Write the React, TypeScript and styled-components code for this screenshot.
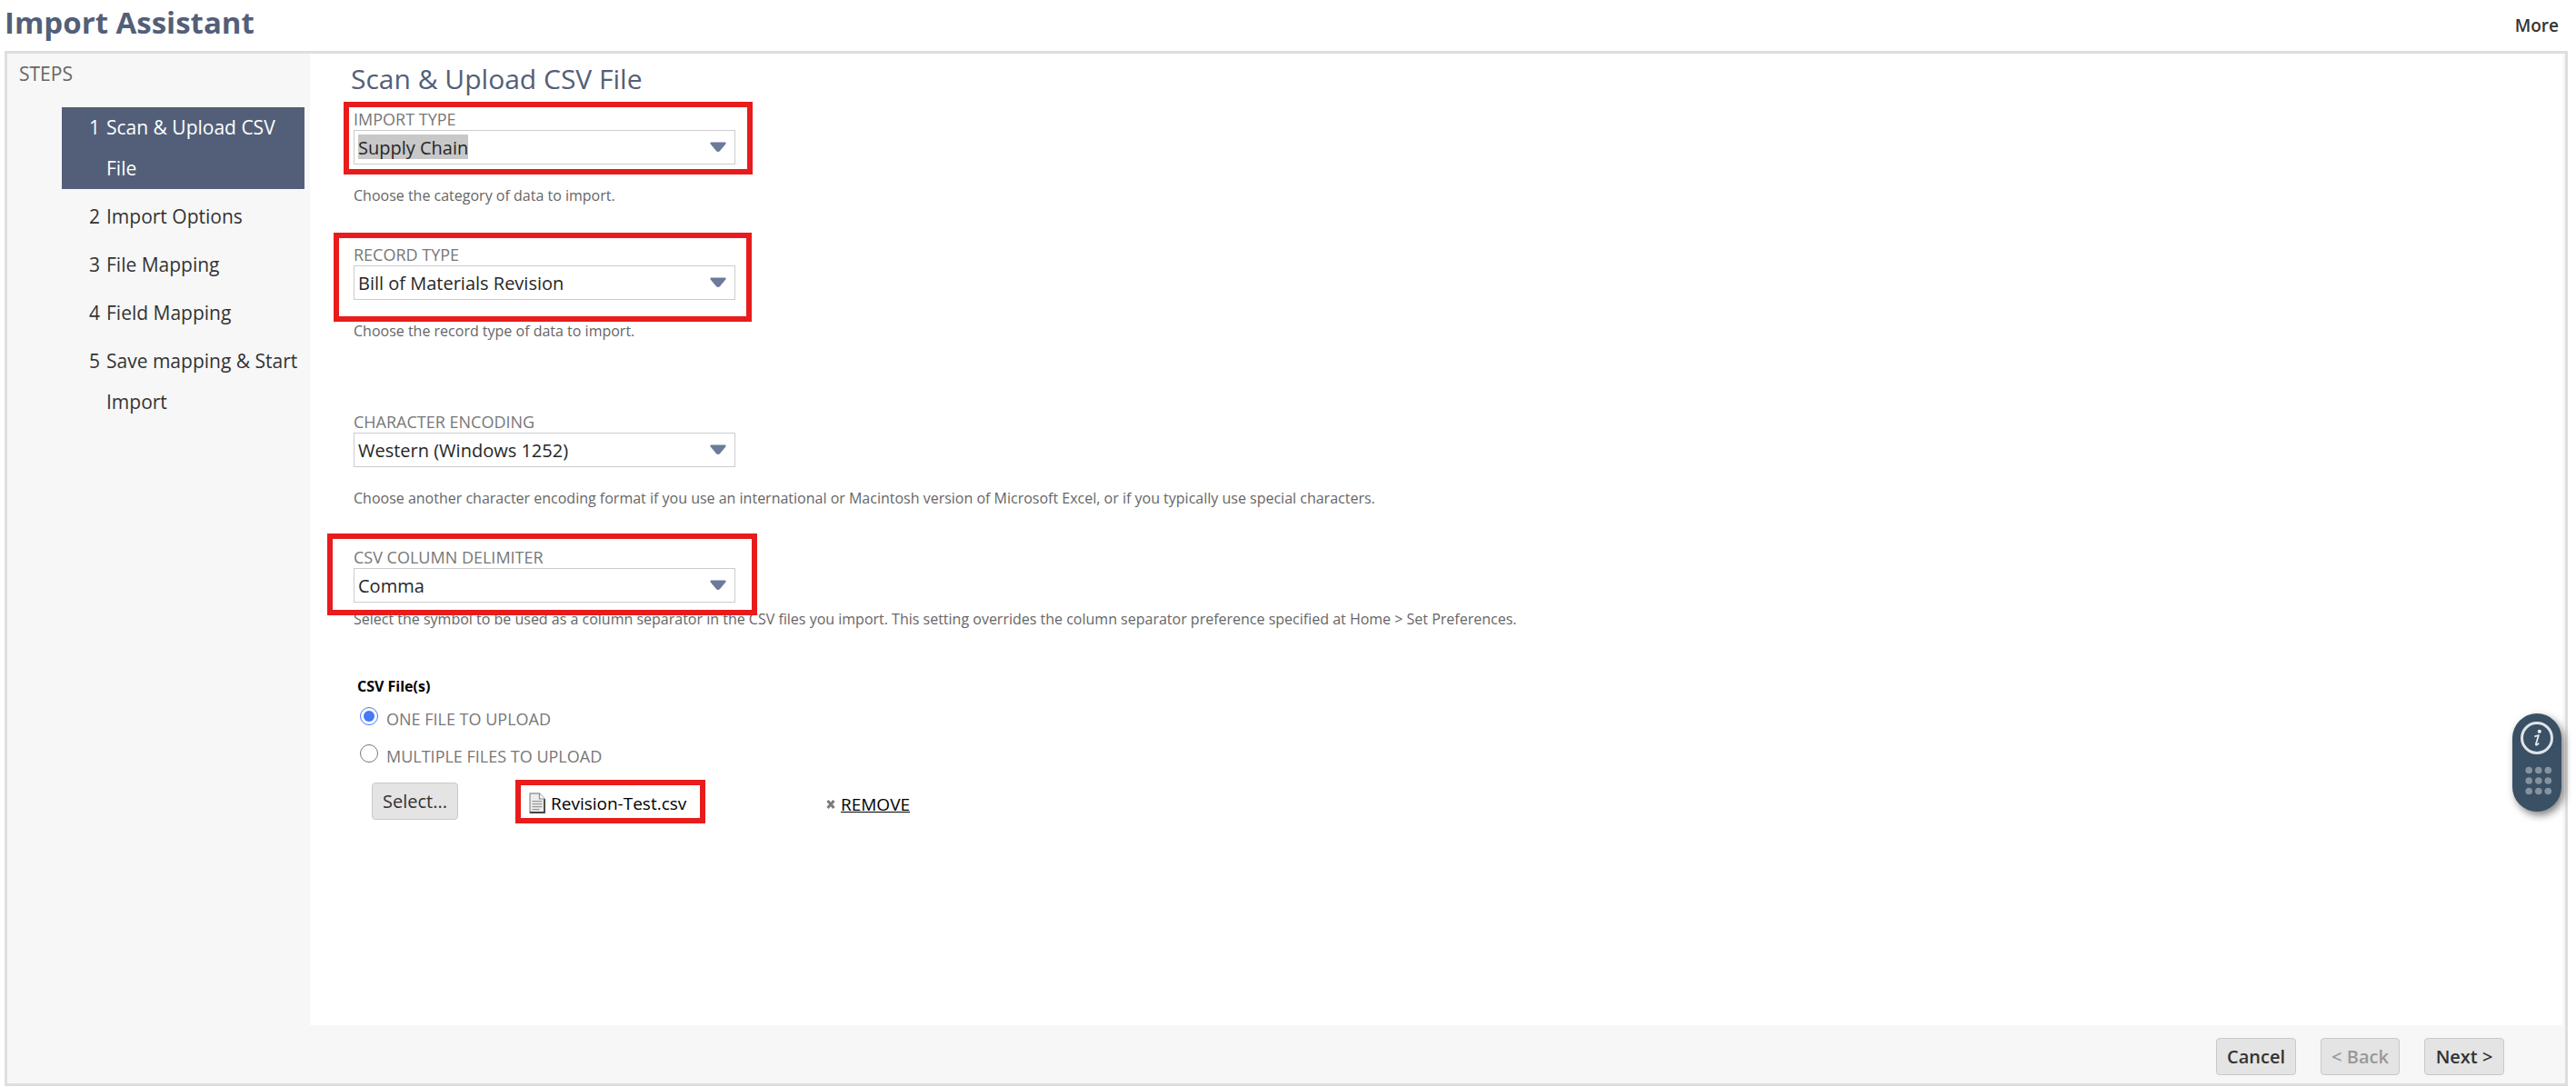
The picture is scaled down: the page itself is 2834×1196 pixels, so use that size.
import React, { useState } from 'react';
import styled, { createGlobalStyle, css } from 'styled-components';

const GlobalStyle = createGlobalStyle`
  *, *::before, *::after { box-sizing: border-box; }
  body {
    margin: 0;
    background: #fff;
    color: #262626;
    font-family: 'Open Sans', 'Noto Sans', sans-serif;
    font-size: 20px;
  }
`;

const Page = styled.div`
  display: flex;
  flex-direction: column;
  min-height: 100vh;
  padding: 0 9px 1px 5px;
`;

const Header = styled.header`
  display: flex;
  justify-content: space-between;
  height: 56px;
  padding: 3px 10px 0 0;
`;

const PageTitle = styled.h1`
  margin: 0;
  color: #535f79;
  font-size: 33px;
  line-height: 44px;
  font-weight: 700;
`;

const MoreButton = styled.button`
  align-self: flex-start;
  padding: 0;
  border: 0;
  background: none;
  color: #333;
  font: 600 19px/50px 'Open Sans', 'Noto Sans', sans-serif;
  cursor: pointer;
`;

const Frame = styled.div`
  flex: 1;
  display: flex;
  flex-direction: column;
  border: 3px solid #dedede;
  background: #f7f7f7;
`;

const Columns = styled.div`
  flex: 1;
  display: grid;
  grid-template-columns: 333px minmax(0, 1fr);
  padding-right: 3px;
`;

const Sidebar = styled.nav`
  padding: 6px 6px 0 13px;
`;

const SidebarTitle = styled.div`
  color: #666;
  font-size: 21px;
  line-height: 32px;
`;

const StepList = styled.ol`
  display: flex;
  flex-direction: column;
  gap: 8px;
  margin: 21px 0 0 47px;
  padding: 0;
  list-style: none;
`;

const Step = styled.li<{ $active?: boolean }>`
  display: grid;
  grid-template-columns: 19px 1fr;
  padding-left: 30px;
  background: ${(p) => (p.$active ? '#535f79' : 'transparent')};
  color: ${(p) => (p.$active ? '#fff' : '#333')};
  font-size: 21px;
  line-height: 45px;
`;

const Main = styled.main`
  padding: 8px 45px 40px;
  background: #fff;
`;

const Heading = styled.h2`
  margin: 0 0 12px;
  color: #535f79;
  font-size: 30px;
  line-height: 40px;
  font-weight: 400;
`;

const Field = styled.div<{ $after: number }>`
  margin: 0 0 ${(p) => p.$after}px 3px;
`;

const FieldBox = styled.div`
  position: relative;
  width: 420px;
`;

const FieldLabel = styled.label`
  display: block;
  color: #777;
  font-size: 18px;
  line-height: 24px;
`;

const Hint = styled.p<{ $tight?: boolean }>`
  margin: ${(p) => (p.$tight ? 6 : 22)}px 0 0;
  color: #666;
  font-size: 16px;
  line-height: 24px;
`;

const SelectWrap = styled.div`
  position: relative;
`;

const Select = styled.select<{ $selected?: boolean }>`
  display: block;
  width: 100%;
  height: 38px;
  padding: 1px 40px 0 4px;
  border: 1px solid #ccc;
  border-radius: 0;
  appearance: none;
  background-color: #fff;
  ${(p) =>
    p.$selected &&
    css`
      background-image: linear-gradient(#c8c8c8, #c8c8c8);
      background-repeat: no-repeat;
      background-position: 4px 4px;
      background-size: 121px 27px;
    `}
  color: #262626;
  font: 400 20px/36px 'Open Sans', 'Noto Sans', sans-serif;
`;

const Arrow = styled.svg`
  position: absolute;
  top: 13px;
  right: 10px;
  pointer-events: none;
`;

const Callout = styled.span<{ $inset: string }>`
  position: absolute;
  inset: ${(p) => p.$inset};
  z-index: 1;
  border: 6px solid #e81c1c;
  pointer-events: none;
`;

const FileSet = styled.fieldset`
  margin: 0 0 0 7px;
  padding: 0;
  border: 0;
`;

const FileLegend = styled.legend`
  padding: 0;
  color: #000;
  font-size: 16px;
  line-height: 24px;
  font-weight: 700;
`;

const RadioRow = styled.label`
  display: flex;
  align-items: center;
  gap: 9px;
  height: 41px;
  padding-left: 3px;
  color: #777;
  font-size: 18px;
`;

const RadioText = styled.span`
  padding-top: 6px;
  line-height: 24px;
`;

const Radio = styled.input`
  width: 20px;
  height: 20px;
  margin: 0;
  accent-color: #4479f7;
`;

const UploadRow = styled.div`
  display: grid;
  grid-template-columns: 173px 327px auto;
  justify-content: start;
  align-items: center;
  margin: 12px 0 0 16px;
`;

const Button = styled.button<{ $strong?: boolean; $width: number }>`
  justify-self: start;
  min-width: ${(p) => p.$width}px;
  height: 41px;
  padding: 0;
  border: 1px solid #c9c9c9;
  border-radius: 4px;
  background: #e4e4e4;
  color: #333;
  font: ${(p) => (p.$strong ? 600 : 400)} 20px/36px 'Open Sans', 'Noto Sans', sans-serif;
  cursor: pointer;
  &:disabled {
    color: #999;
    cursor: default;
  }
`;

const FileName = styled.span`
  position: relative;
  justify-self: start;
  display: flex;
  align-items: center;
  gap: 6px;
  padding-top: 4px;
  color: #000;
  font-size: 19px;
  line-height: 28px;
`;

const RemoveLink = styled.a`
  display: flex;
  align-items: center;
  gap: 6px;
  padding-top: 6px;
  color: #000;
  font-size: 19px;
  line-height: 28px;
  text-decoration: none;
`;

const RemoveText = styled.span`
  text-decoration: underline;
`;

const Footer = styled.footer`
  display: flex;
  justify-content: flex-end;
  gap: 27px;
  height: 64px;
  padding: 14px 67px 0 0;
`;

const Widget = styled.aside`
  position: fixed;
  top: 785px;
  right: 16px;
  z-index: 2;
  display: flex;
  width: 54px;
  height: 108px;
  border-radius: 27px;
  background: #3a5064;
  box-shadow: 3px 4px 9px rgba(0, 0, 0, 0.5);
`;

const WidgetButton = styled.button`
  padding: 0;
  border: 0;
  background: none;
  cursor: pointer;
`;

type SelectFieldProps = {
  id: string;
  label: string;
  value: string;
  hint: string;
  after: number;
  callout?: string;
  tight?: boolean;
  selected?: boolean;
};

function SelectField({ id, label, value, hint, after, callout, tight, selected }: SelectFieldProps) {
  return (
    <Field $after={after}>
      <FieldBox>
        <FieldLabel htmlFor={id}>{label}</FieldLabel>
        <SelectWrap>
          <Select id={id} defaultValue={value} $selected={selected}>
            <option>{value}</option>
          </Select>
          <Arrow width="18" height="12" viewBox="0 0 18 12" aria-hidden="true">
            <path d="M1.5 0.5h15q1.5 0 1 1.8l-6.2 7.5q-2.3 2.4-4.6 0l-6.2-7.5q-.5-1.8 1-1.8z" fill="#6b7b99" />
          </Arrow>
        </SelectWrap>
        {callout && <Callout $inset={callout} />}
      </FieldBox>
      <Hint $tight={tight}>{hint}</Hint>
    </Field>
  );
}

function FileIcon() {
  return (
    <svg width="18" height="23" viewBox="0 0 18 23" aria-hidden="true">
      <path d="M1 1h10.5l5.5 6v15H1z" fill="#ececec" stroke="#999" strokeWidth="1.4" />
      <path d="M1 22h16V7" fill="none" stroke="#444" strokeWidth="1.8" />
      <path d="M11.5 1v6H17" fill="#fff" stroke="#888" strokeWidth="1.2" />
      <path d="M3.5 9.7h11M3.5 12.7h11M3.5 15.7h11M3.5 18.7h8" stroke="#999" strokeWidth="1.3" />
    </svg>
  );
}

function CrossIcon() {
  return (
    <svg width="10" height="10" viewBox="0 0 10 10" aria-hidden="true">
      <path d="M1.5 1l7 8M8.5 1l-7 8" stroke="#7c7c7c" strokeWidth="3" />
    </svg>
  );
}

const steps = ['Scan & Upload CSV File', 'Import Options', 'File Mapping', 'Field Mapping', 'Save mapping & Start Import'];

export default function App() {
  const [mode, setMode] = useState('one');
  return (
    <>
      <GlobalStyle />
      <Page>
        <Header>
          <PageTitle>Import Assistant</PageTitle>
          <MoreButton type="button">More</MoreButton>
        </Header>
        <Frame>
          <Columns>
            <Sidebar>
              <SidebarTitle>STEPS</SidebarTitle>
              <StepList>
                {steps.map((name, i) => (
                  <Step key={name} $active={i === 0}>
                    <span>{i + 1}</span>
                    <span>{name}</span>
                  </Step>
                ))}
              </StepList>
            </Sidebar>
            <Main>
              <Heading>Scan &amp; Upload CSV File</Heading>
              <SelectField
                id="import-type"
                label="IMPORT TYPE"
                value="Supply Chain"
                hint="Choose the category of data to import."
                after={41}
                callout="-7px -19px -11px -11px"
                selected
              />
              <SelectField
                id="record-type"
                label="RECORD TYPE"
                value="Bill of Materials Revision"
                hint="Choose the record type of data to import."
                after={76}
                callout="-12px -18px -24px -22px"
              />
              <SelectField
                id="encoding"
                label="CHARACTER ENCODING"
                value="Western (Windows 1252)"
                hint="Choose another character encoding format if you use an international or Macintosh version of Microsoft Excel, or if you typically use special characters."
                after={41}
              />
              <SelectField
                id="delimiter"
                label="CSV COLUMN DELIMITER"
                value="Comma"
                hint="Select the symbol to be used as a column separator in the CSV files you import. This setting overrides the column separator preference specified at Home > Set Preferences."
                after={50}
                callout="-14px -24px -14px -29px"
                tight
              />
              <FileSet>
                <FileLegend>CSV File(s)</FileLegend>
                <RadioRow>
                  <Radio type="radio" name="mode" checked={mode === 'one'} onChange={() => setMode('one')} />
                  <RadioText>ONE FILE TO UPLOAD</RadioText>
                </RadioRow>
                <RadioRow>
                  <Radio type="radio" name="mode" checked={mode === 'many'} onChange={() => setMode('many')} />
                  <RadioText>MULTIPLE FILES TO UPLOAD</RadioText>
                </RadioRow>
                <UploadRow>
                  <Button type="button" $width={95}>Select...</Button>
                  <FileName>
                    <FileIcon />
                    Revision-Test.csv
                    <Callout $inset="-8px -21px -8px -15px" />
                  </FileName>
                  <RemoveLink href="#remove">
                    <CrossIcon />
                    <RemoveText>REMOVE</RemoveText>
                  </RemoveLink>
                </UploadRow>
              </FileSet>
            </Main>
          </Columns>
          <Footer>
            <Button type="button" $strong $width={88}>Cancel</Button>
            <Button type="button" $strong $width={87} disabled>&lt; Back</Button>
            <Button type="button" $strong $width={88}>Next &gt;</Button>
          </Footer>
        </Frame>
      </Page>
      <Widget>
        <WidgetButton type="button" aria-label="Help">
          <svg width="54" height="108" viewBox="0 0 54 108" aria-hidden="true">
            <circle cx="27" cy="27" r="16.5" fill="none" stroke="#dfe3ea" strokeWidth="3" />
            <circle cx="29.8" cy="19.8" r="2.1" fill="#e8ebf0" />
            <path d="M24.3 25.3l4.6-1.3-2.9 9.3q-.5 2 1.2 1.1l2-1.6" fill="none" stroke="#e8ebf0" strokeWidth="1.8" strokeLinejoin="round" />
            {[62.5, 74, 85.5].map((cy) =>
              [18.2, 28.8, 39.3].map((cx) => <circle key={`${cx}-${cy}`} cx={cx} cy={cy} r="3.8" fill="#8593a0" />)
            )}
          </svg>
        </WidgetButton>
      </Widget>
    </>
  );
}
